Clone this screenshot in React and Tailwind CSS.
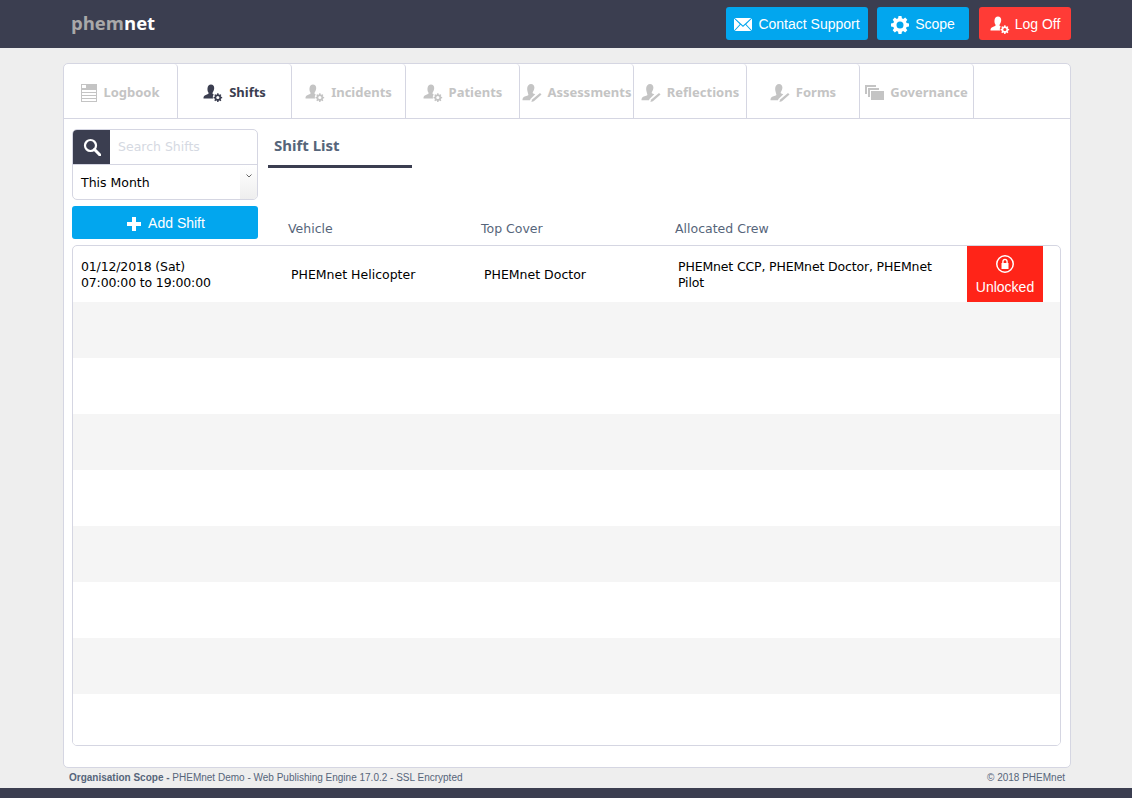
import React from 'react';

const PersonGear = ({ className }) => (
  <svg viewBox="0 0 20 18" className={className} fill="currentColor">
    <path d="M8 0.500c2 0 3.200 1.500 3.200 3.500 0 1.900-.8 3.400-1.500 4.400-.4.600-.2 1.200.3 1.600l.7.500c-.9 1.100-1.100 2.600-.6 4H0.500c-.2-1.800.7-3 2.300-3.600l2.200-.9c.6-.3.8-.9.4-1.500C4.700 7.500 4.300 5.900 4.500 4.200 4.700 2 6 .5 8 .5z" />
    <g transform="translate(15 13.500) scale(.8) translate(-14.600 -13.700)">
      <path fillRule="evenodd" d="M15.200 8.500l.3 1.400 1 .4 1.200-.8 1.100 1.100-.8 1.200.4 1 1.400.3v1.600l-1.400.3-.4 1 .8 1.200-1.100 1.100-1.200-.8-1 .4-.3 1.400h-1.600l-.3-1.400-1-.4-1.200.8-1.100-1.100.8-1.200-.4-1-1.400-.3v-1.600l1.400-.3.4-1-.8-1.200 1.100-1.100 1.200.8 1-.4.3-1.400zM14.400 11.700a2 2 0 1 0 0 4 2 2 0 0 0 0-4z" />
    </g>
  </svg>
);

const PersonPen = ({ className }) => (
  <svg viewBox="0 0 20 18" className={className} fill="currentColor">
    <path d="M9 0c2.100 0 3.400 1.500 3.400 3.600 0 1.900-.8 3.400-1.500 4.400-.4.600-.2 1.100.4 1.400l2 .8-4.800 4.900-.5 1.200H.5c-.2-1.800.7-3.200 2.300-3.800l3-1.100c.6-.3.800-.9.400-1.500C5.400 7.400 5 5.800 5.200 4.100 5.400 1.900 6.900 0 9 0z" />
    <path d="M18 9l1.500 1.500-7.600 6.800-2.500 .7.800-2.400z" />
  </svg>
);

const LogbookIcon = ({ className }) => (
  <svg viewBox="0 0 16 18" className={className} fill="currentColor">
    <path fillRule="evenodd" d="M0 0h16v18H0zM1 1v3h4V1zM1 6v2h14V6zM1 9v2h14V9zM1 12v2h14v-2zM1 15v2h14v-2z" />
  </svg>
);

const GovernanceIcon = ({ className }) => (
  <svg viewBox="0 0 19 15" className={className} fill="currentColor">
    <path d="M0 0h11v2H2v7H0z" />
    <path d="M3 3h11v2H5v7H3z" />
    <path d="M6 6h13v9H6z" />
  </svg>
);

const MailIcon = ({ className }) => (
  <svg viewBox="0 0 18 13" className={className} fill="currentColor">
    <path d="M0 .4v12.200l5.800-6.400zM18 .4v12.200l-5.800-6.400z" />
    <path d="M.8 0h16.400L9 7.400z" />
    <path d="M.8 13h16.400l-5.800-6.200L9 9 6.600 6.800z" />
  </svg>
);

const GearIcon = ({ className }) => (
  <svg viewBox="0 0 18 18" className={className} fill="currentColor">
    <path fillRule="evenodd" d="M10.500 0l.4 2.300 1.300.6 2-1.300 2.100 2.100-1.300 2 .6 1.300 2.400.5v3l-2.400.5-.6 1.300 1.300 2-2.100 2.100-2-1.300-1.300.6-.4 2.300h-3l-.4-2.300-1.300-.6-2 1.300-2.100-2.100 1.300-2-.6-1.300L0 10.500v-3l2.400-.5.600-1.300-1.300-2 2.100-2.100 2 1.300 1.300-.6L7.500 0zM9 5.500a3.500 3.500 0 1 0 0 7 3.500 3.500 0 0 0 0-7z" />
  </svg>
);

const tabs = [
  { label: 'Logbook', icon: LogbookIcon, size: 'w-[16px] h-[18px]', width: 'w-[114px]' },
  { label: 'Shifts', icon: PersonGear, size: 'w-[20px] h-[18px]', width: 'w-[114px]', active: true },
  { label: 'Incidents', icon: PersonGear, size: 'w-[20px] h-[18px]', width: 'w-[114px]' },
  { label: 'Patients', icon: PersonGear, size: 'w-[20px] h-[18px]', width: 'w-[114px]' },
  { label: 'Assessments', icon: PersonPen, size: 'w-[20px] h-[18px]', width: 'w-[114px]' },
  { label: 'Reflections', icon: PersonPen, size: 'w-[20px] h-[18px]', width: 'w-[113px]' },
  { label: 'Forms', icon: PersonPen, size: 'w-[20px] h-[18px]', width: 'w-[113px]' },
  { label: 'Governance', icon: GovernanceIcon, size: 'w-[19px] h-[15px]', width: 'w-[114px]' },
];

const Tab = ({ tab }) => {
  const Icon = tab.icon;
  return (
    <div className={`${tab.width} h-full shrink-0 border-r border-[#d5d6e2] rounded-t flex items-center justify-center gap-[6px] pt-[3px] font-['Noto_Sans',sans-serif] text-[13px] font-bold whitespace-nowrap ${tab.active ? 'text-[#3b3e50]' : 'text-[#c4c4c4]'}`}>
      <Icon className={tab.size} />
      <span>{tab.label}</span>
    </div>
  );
};

const emptyRows = [1, 2, 3, 4, 5, 6, 7, 8];

export default function App() {
  return (
    <div className="h-[798px] flex flex-col bg-[#eeeeee] overflow-hidden font-['DejaVu_Sans',sans-serif]">
      <header className="h-12 shrink-0 bg-[#3b3e50] pl-[71px] pr-[61px] flex items-center justify-between">
        <div className="font-['Open_Sans',sans-serif] text-[18.5px] font-bold -mt-[3px]">
          <span className="text-[#a9a9a9]">phem</span>
          <span className="text-white">net</span>
        </div>
        <div className="flex gap-[9px] font-['Liberation_Sans',sans-serif] text-[14px] text-white -mt-[1px]">
          <button className="h-[33px] w-[142px] pt-[2px] bg-[#02a6ee] rounded-[3px] flex items-center justify-center gap-[6px]">
            <MailIcon className="w-[18px] h-[13px]" />
            Contact Support
          </button>
          <button className="h-[33px] w-[92px] pt-[2px] bg-[#02a6ee] rounded-[3px] flex items-center justify-center gap-[6px]">
            <GearIcon className="w-[18px] h-[18px]" />
            Scope
          </button>
          <button className="h-[33px] w-[92px] pt-[2px] ml-[1px] bg-[#ff3b36] rounded-[3px] flex items-center justify-center gap-[5px]">
            <PersonGear className="w-[20px] h-[18px]" />
            Log Off
          </button>
        </div>
      </header>

      <div className="pt-[15px] px-[63px] shrink-0">
        <main className="h-[705px] w-[1008px] bg-white border border-[#d5d6e2] rounded-[5px] flex flex-col">
          <nav className="h-[55px] shrink-0 flex border-b border-[#d5d6e2]">
            {tabs.map((t) => (
              <Tab key={t.label} tab={t} />
            ))}
          </nav>

          <div className="flex-1 px-[8px] pt-[10px] flex flex-col text-[12.5px] text-black">
            <div className="flex h-[116px] shrink-0">
              <div className="w-[186px] shrink-0">
                <div className="border border-[#d5d6e2] rounded-[5px] overflow-hidden h-[71px]">
                  <div className="h-[35px] flex border-b border-[#d5d6e2]">
                    <div className="w-[37px] bg-[#3b3e50] flex items-center justify-center">
                      <svg viewBox="0 0 18 18" className="w-[18px] h-[18px]" fill="none" stroke="white">
                        <circle cx="7.500" cy="7.500" r="5.500" strokeWidth="2.200" />
                        <path d="M11.500 11.500L17 17" strokeWidth="3" strokeLinecap="round" />
                      </svg>
                    </div>
                    <div className="flex-1 flex items-center pl-[8px] text-[#d5d9e2]">Search Shifts</div>
                  </div>
                  <div className="flex h-[35px]">
                    <div className="flex-1 flex items-center pl-[8px] pt-[2px]">This Month</div>
                    <div className="w-[17px] bg-gradient-to-b from-white to-[#eeeeee] flex justify-center pt-[9px]">
                      <svg viewBox="0 0 6 4" className="w-[6px] h-[4px]" fill="none" stroke="#555" strokeWidth="0.9">
                        <path d="M.5.5L3 3 5.500.5" />
                      </svg>
                    </div>
                  </div>
                </div>
                <button className="mt-[6px] w-full h-[33px] pl-[2px] pt-[2px] bg-[#02a6ee] rounded-[3px] text-white font-['Liberation_Sans',sans-serif] text-[14px] flex items-center justify-center gap-[7px]">
                  <svg viewBox="0 0 14 14" className="w-[14px] h-[14px]" fill="white">
                    <path d="M5 0h4v5h5v4H9v5H5V9H0V5h5z" />
                  </svg>
                  Add Shift
                </button>
              </div>

              <div className="flex-1 pl-[10px]">
                <div className="w-[144px] h-[39px] border-b-[3px] border-[#3b3e50] pl-[6px] pt-[5px] font-['Noto_Sans',sans-serif] text-[15px] leading-[22px] font-bold text-[#56657a]">
                  Shift List
                </div>
                <div className="flex mt-[52px] pl-[20px] text-[#56657a] leading-[18px]">
                  <div className="w-[193px]">Vehicle</div>
                  <div className="w-[194px]">Top Cover</div>
                  <div>Allocated Crew</div>
                </div>
              </div>
            </div>

            <div className="w-[989px] h-[501px] border border-[#d5d6e2] rounded-[5px] overflow-hidden">
              <div className="h-[56px] flex items-center">
                <div className="w-[218px] pt-[2px] pl-[8px] leading-[16px] tracking-[-0.15px]">
                  01/12/2018 (Sat)
                  <br />
                  07:00:00 to 19:00:00
                </div>
                <div className="w-[193px] pt-[2px]">PHEMnet Helicopter</div>
                <div className="w-[194px] pt-[2px]">PHEMnet Doctor</div>
                <div className="w-[289px] pt-[2px] pr-[20px] leading-[16px] tracking-[-0.15px]">PHEMnet CCP, PHEMnet Doctor, PHEMnet Pilot</div>
                <div className="w-[76px] h-full pt-[4px] bg-[#ff2418] text-white font-['Liberation_Sans',sans-serif] text-[14px] flex flex-col items-center justify-center gap-[4px]">
                  <svg viewBox="0 0 18 18" className="w-[18px] h-[18px]" fill="white">
                    <path fillRule="evenodd" d="M9 0a9 9 0 1 1 0 18A9 9 0 0 1 9 0zm0 1.500a7.500 7.500 0 1 0 0 15 7.500 7.500 0 0 0 0-15z" />
                    <path fillRule="evenodd" d="M9 3.800c1.700 0 2.800 1.200 2.800 2.900v1.200h.7v6H5.500v-6h.7V6.700C6.200 5 7.300 3.800 9 3.800zm0 1.400c-.9 0-1.400.6-1.400 1.500v1.200h2.800V6.700c0-.9-.5-1.500-1.400-1.500z" />
                  </svg>
                  Unlocked
                </div>
              </div>
              {emptyRows.map((n) => (
                <div key={n} className={`h-[56px] ${n % 2 === 1 ? 'bg-[#f5f5f5]' : 'bg-white'}`} />
              ))}
            </div>
          </div>
        </main>
      </div>

      <footer className="flex justify-between pl-[69px] pr-[67px] h-[20px] pt-[4px] shrink-0 font-['Liberation_Sans',sans-serif] text-[10px] leading-[12px] text-[#56657a]">
        <div>
          <span className="font-bold">Organisation Scope - </span>
          PHEMnet Demo - Web Publishing Engine 17.0.2 - SSL Encrypted
        </div>
        <div>© 2018 PHEMnet</div>
      </footer>
      <div className="flex-1 bg-[#3b3e50]" />
    </div>
  );
}
